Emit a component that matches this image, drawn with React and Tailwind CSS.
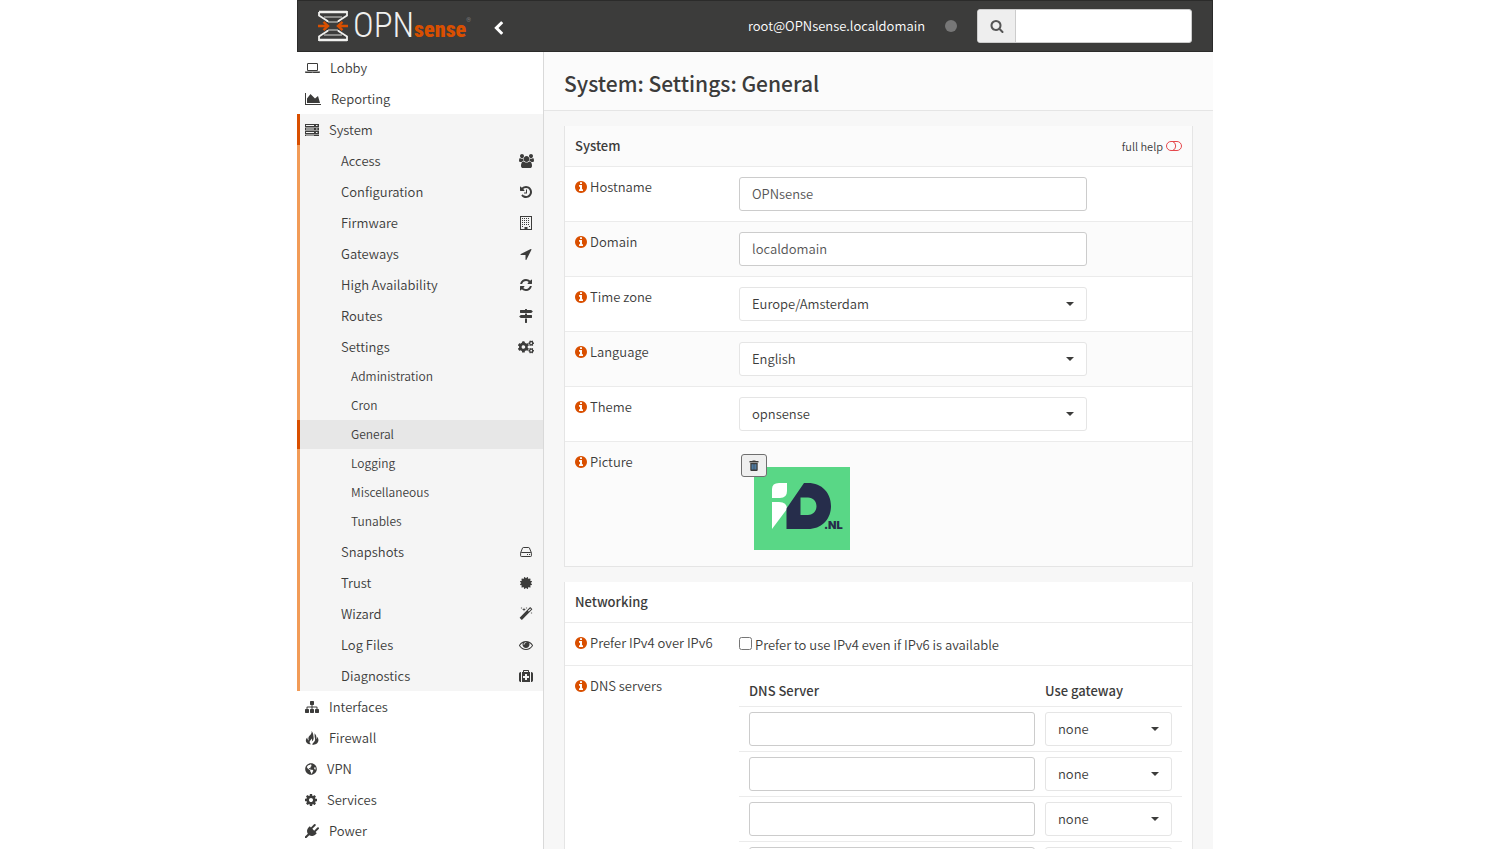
import { FaCogs, FaGlobeAmericas } from "react-icons/fa";

function Glyph({ d, viewBox = "0 0 1792 1792", className = "h-[14px] w-[14px]" }) {
  return (
    <svg viewBox={viewBox} className={`shrink-0 fill-current ${className}`} aria-hidden="true">
      <path fillRule="evenodd" d={d} />
    </svg>
  );
}

const paths = {
  laptop:
    "M416 1280q-66 0-113-47t-47-113v-704q0-66 47-113t113-47h1088q66 0 113 47t47 113v704q0 66-47 113t-113 47h-1088zm-32-864v704q0 13 9.5 22.5t22.5 9.5h1088q13 0 22.5-9.5t9.5-22.5v-704q0-13-9.5-22.5t-22.5-9.5h-1088q-13 0-22.5 9.5t-9.5 22.5zm1376 928h160v96q0 40-47 68t-113 28h-1600q-66 0-113-28t-47-68v-96h1760zm-720 96q16 0 16-16t-16-16h-160q-16 0-16 16t16 16h160z",
  chart: "M2048 1536v128h-2048v-1536h128v1408h1920zm-384-1024l256 896h-1664v-576l448-576 576 576z",
  server:
    "M0 128h1792v384h-1792zM128 256v128h1024v-128zM0 576h1792v384h-1792zM128 704v128h1024v-128zM0 1024h1792v384h-1792zM128 1152v128h1024v-128zM0 1472h1792v192h-1792zM128 1536v64h1024v-64zM1400 256h200v128h-200zM1400 704h200v128h-200zM1400 1152h200v128h-200z",
  users:
    "M529 896q-162 5-265 128h-134q-82 0-138-40.5t-56-118.5q0-353 124-353 6 0 43.5 21t97.5 42.5 119 21.5q67 0 133-23-5 37-5 66 0 139 81 256zm1071 637q0 120-73 189.5t-194 69.5h-874q-121 0-194-69.5t-73-189.5q0-53 3.5-103.5t14-109 26.5-108.5 43-97.5 62-81 85.5-53.5 111.5-20q10 0 43 21.5t73 48 107 48 135 21.5 135-21.5 107-48 73-48 43-21.5q61 0 111.5 20t85.5 53.5 62 81 43 97.5 26.5 108.5 14 109 3.5 103.5zm-1024-1277q0 106-75 181t-181 75-181-75-75-181 75-181 181-75 181 75 75 181zm704 384q0 159-112.5 271.5t-271.5 112.5-271.5-112.5-112.5-271.5 112.5-271.5 271.5-112.5 271.5 112.5 112.5 271.5zm576 225q0 78-56 118.5t-138 40.5h-134q-103-123-265-128 81-117 81-256 0-29-5-66 66 23 133 23 59 0 119-21.5t97.5-42.5 43.5-21q124 0 124 353zm-128-609q0 106-75 181t-181 75-181-75-75-181 75-181 181-75 181 75 75 181z",
  history:
    "M1664 896q0 156-61 298t-164 245-245 164-298 61q-172 0-327-72.5t-264-204.5q-7-10-6.5-22.5t8.5-20.5l137-138q10-9 25-9 16 2 23 12 73 95 179 147t225 52q104 0 198.5-40.5t163.5-109.5 109.5-163.5 40.5-198.5-40.5-198.5-109.5-163.5-163.5-109.5-198.5-40.5q-98 0-188 35.5t-160 101.5l137 138q31 30 14 69-17 40-59 40h-448q-26 0-45-19t-19-45v-448q0-42 40-59 39-17 69 14l130 129q107-101 244.5-156.5t284.5-55.5q156 0 298 61t245 164 164 245 61 298zm-640-288v448q0 14-9 23t-23 9h-320q-14 0-23-9t-9-23v-64q0-14 9-23t23-9h224v-352q0-14 9-23t23-9h64q14 0 23 9t9 23z",
  building:
    "M128 0h1536v1792h-1536zM256 128v1536h448v-256h384v256h448v-1536zM384 256h128v128h-128zM640 256h128v128h-128zM896 256h128v128h-128zM1152 256h128v128h-128zM384 512h128v128h-128zM640 512h128v128h-128zM896 512h128v128h-128zM1152 512h128v128h-128zM384 768h128v128h-128zM640 768h128v128h-128zM896 768h128v128h-128zM1152 768h128v128h-128zM384 1024h128v128h-128zM640 1024h128v128h-128zM896 1024h128v128h-128zM1152 1024h128v128h-128zM384 1280h128v128h-128zM1280 1280h128v128h-128z",
  arrow:
    "M1593 349l-640 1280q-17 35-57 35-5 0-15-2-22-5-35.5-22.5t-13.5-39.5v-576h-576q-22 0-39.5-13.5t-22.5-35.5 4-42 29-30l1280-640q13-7 29-7 27 0 45 19 15 14 18.5 34.5t-6.5 39.5z",
  refresh:
    "M1639 1056q0 5-1 7-64 268-268 434.5t-478 166.5q-146 0-282.5-55t-243.5-157l-129 129q-19 19-45 19t-45-19-19-45v-448q0-26 19-45t45-19h448q26 0 45 19t19 45-19 45l-137 137q71 66 161 102t187 36q134 0 250-65t186-179q11-17 53-117 8-23 30-23h192q13 0 22.5 9.5t9.5 22.5zm25-800v448q0 26-19 45t-45 19h-448q-26 0-45-19t-19-45 19-45l138-138q-148-137-349-137-134 0-250 65t-186 179q-11 17-53 117-8 23-30 23h-199q-13 0-22.5-9.5t-9.5-22.5v-7q65-268 270-434.5t480-166.5q146 0 284 55.5t245 156.5l130-129q19-19 45-19t45 19 19 45z",
  signs:
    "M1745 297q10 10 10 23t-10 23l-141 141q-28 28-68 28h-1344q-26 0-45-19t-19-45v-256q0-26 19-45t45-19h576v-64q0-26 19-45t45-19h128q26 0 45 19t19 45v64h512q40 0 68 28zm-977 919h256v512q0 26-19 45t-45 19h-128q-26 0-45-19t-19-45v-512zm832-448q26 0 45 19t19 45v256q0 26-19 45t-45 19h-1344q-40 0-68-28l-141-141q-10-10-10-23t10-23l141-141q28-28 68-28h512v-192h256v192h576z",
  certificate:
    "M1504 896l138 135q30 28 20 70-12 41-52 51l-188 48 53 186q12 41-19 70-29 31-70 19l-186-53-48 188q-10 40-51 52-12 2-19 2-31 0-51-22l-135-138-135 138q-28 30-70 20-41-11-51-52l-48-188-186 53q-41 12-70-19-31-29-19-70l53-186-188-48q-40-10-52-51-10-42 20-70l138-135-138-135q-30-28-20-70 12-41 52-51l188-48-53-186q-12-41 19-70 29-31 70-19l186 53 48-188q10-41 51-51 41-12 70 19l135 139 135-139q29-30 70-19 41 10 51 51l48 188 186-53q41-12 70 19 31 29 19 70l-53 186 188 48q40 10 52 51 10 42-20 70z",
  magic:
    "M1254 581l293-293-107-107-293 293zm447-293q0 27-18 45l-1286 1286q-18 18-45 18t-45-18l-198-198q-18-18-18-45t18-45l1286-1286q18-18 45-18t45 18l198 198q18 18 18 45zm-1351-190l98 30-98 30-30 98-30-98-98-30 98-30 30-98zm350 162l196 60-196 60-60 196-60-196-196-60 196-60 60-196zm930 478l98 30-98 30-30 98-30-98-98-30 98-30 30-98zm-640-640l98 30-98 30-30 98-30-98-98-30 98-30 30-98z",
  eye:
    "M1664 960q-152-236-381-353 61 104 61 225 0 185-131.5 316.5t-316.5 131.5-316.5-131.5-131.5-316.5q0-121 61-225-229 117-381 353 133 205 333.5 326.5t434.5 121.5 434.5-121.5 333.5-326.5zm-720-384q0-20-14-34t-34-14q-125 0-214.5 89.5t-89.5 214.5q0 20 14 34t34 14 34-14 14-34q0-86 61-147t147-61q20 0 34-14t14-34zm848 384q0 34-20 69-140 230-376.5 368.5t-499.5 138.5-499.5-139-376.5-368q-20-35-20-69t20-69q140-229 376.5-368t499.5-139 499.5 139 376.5 368q20 35 20 69z",
  medkit:
    "M1280 1120v-192q0-14-9-23t-23-9h-224v-224q0-14-9-23t-23-9h-192q-14 0-23 9t-9 23v224h-224q-14 0-23 9t-9 23v192q0 14 9 23t23 9h224v224q0 14 9 23t23 9h192q14 0 23-9t9-23v-224h224q14 0 23-9t9-23zm-640-736h512v-128h-512v128zm-384 0v1280h-32q-92 0-158-66t-66-158v-832q0-92 66-158t158-66h32zm1152 0v1280h-1024v-1280h128v-160q0-40 28-68t68-28h576q40 0 68 28t28 68v160h128zm384 224v832q0 92-66 158t-158 66h-32v-1280h32q92 0 158 66t66 158z",
  sitemap:
    "M1792 1248v320q0 40-28 68t-68 28h-320q-40 0-68-28t-28-68v-320q0-40 28-68t68-28h96v-192h-512v192h96q40 0 68 28t28 68v320q0 40-28 68t-68 28h-320q-40 0-68-28t-28-68v-320q0-40 28-68t68-28h96v-192h-512v192h96q40 0 68 28t28 68v320q0 40-28 68t-68 28h-320q-40 0-68-28t-28-68v-320q0-40 28-68t68-28h96v-192q0-52 38-90t90-38h512v-192h-96q-40 0-68-28t-28-68v-320q0-40 28-68t68-28h320q40 0 68 28t28 68v320q0 40-28 68t-68 28h-96v192h512q52 0 90 38t38 90v192h96q40 0 68 28t28 68z",
  cog:
    "M1152 896q0-106-75-181t-181-75-181 75-75 181 75 181 181 75 181-75 75-181zm512-109v222q0 12-8 23t-20 13l-185 28q-19 54-39 91 35 50 107 138 10 12 10 25t-9 23q-27 37-99 108t-94 71q-12 0-26-9l-138-108q-44 23-91 38-16 136-29 186-7 28-36 28h-222q-14 0-24.5-8.5t-11.5-21.5l-28-184q-49-16-90-37l-141 107q-10 9-25 9-14 0-25-11-126-114-165-168-7-10-7-23 0-12 8-23 15-21 51-66.5t54-70.5q-27-50-41-99l-183-27q-13-2-21-12.5t-8-23.5v-222q0-12 8-23t19-13l186-28q14-46 39-92-40-57-107-138-10-12-10-24 0-10 9-23 26-36 98.5-107.5t94.5-71.5q13 0 26 10l138 107q44-23 91-38 16-136 29-186 7-28 36-28h222q14 0 24.5 8.5t11.5 21.5l28 184q49 16 90 37l142-107q9-9 24-9 13 0 25 10 129 119 165 170 7 8 7 22 0 12-8 23-15 21-51 66.5t-54 70.5q26 50 41 98l183 28q13 2 21 12.5t8 23.5z",
  plug:
    "M1755 453q37 38 37 90.5t-37 90.5l-401 400 150 150-160 160q-163 163-389.5 186.5t-411.5-100.5l-362 362h-181v-181l362-362q-124-185-100.5-411.5t186.5-389.5l160-160 150 150 400-401q38-37 91-37t90 37 37 90.5-37 90.5l-400 401 234 234 401-400q38-37 91-37t90 37z",
  search:
    "M1216 832q0-185-131.5-316.5t-316.5-131.5-316.5 131.5-131.5 316.5 131.5 316.5 316.5 131.5 316.5-131.5 131.5-316.5zm512 832q0 52-38 90t-90 38q-54 0-90-38l-343-342q-179 124-399 124-143 0-273.5-55.5t-225-150-150-225-55.5-273.5 55.5-273.5 150-225 225-150 273.5-55.5 273.5 55.5 225 150 150 225 55.5 273.5q0 220-124 399l343 343q37 37 37 90z",
  info:
    "M1152 1376v-160q0-14-9-23t-23-9h-96v-512q0-14-9-23t-23-9h-320q-14 0-23 9t-9 23v160q0 14 9 23t23 9h96v320h-96q-14 0-23 9t-9 23v160q0 14 9 23t23 9h448q14 0 23-9t9-23zm-128-896v-160q0-14-9-23t-23-9h-192q-14 0-23 9t-9 23v160q0 14 9 23t23 9h192q14 0 23-9t9-23zm640 416q0 209-103 385.5t-279.5 279.5-385.5 103-385.5-103-279.5-279.5-103-385.5 103-385.5 279.5-279.5 385.5-103 385.5 103 279.5 279.5 103 385.5z",
  chevron:
    "M1427 301l-531 531 531 531q19 19 19 45t-19 45l-166 166q-19 19-45 19t-45-19l-742-742q-19-19-19-45t19-45l742-742q19-19 45-19t45 19l166 166q19 19 19 45t-19 45z",
};

const CROPPED = "128 128 1536 1536";

function FlameIcon() {
  return (
    <svg viewBox="0 0 14 14" className="h-[14px] w-[14px] shrink-0 fill-current" aria-hidden="true">
      <path d="M6.600 0C7 2 6 3.300 4.500 4.800C3.200 6.200 3 7.900 3.900 9.400C2.800 9 2.200 8 2.300 6.600C.8 7.700.4 9.700 1.300 11.200C2.200 12.700 4 13.500 6.200 13.200C4.800 12.500 4.200 11.300 4.900 10C5.400 9.100 6.300 8.600 6.500 7.400C7.200 8.200 7.300 9.300 6.700 10.400C8.200 9.500 8.900 8 8.600 6.200C8.300 4.300 8.300 1.900 6.600 0z" />
      <path d="M9.400 2.200C9.900 3.800 9.400 5 9.800 6.400C10.200 7.900 10.300 9.300 9.400 10.600C8.800 11.500 7.900 12 7.500 12.800C7.300 13.200 7.400 13.600 7.600 14C10.400 13.900 12.500 12.700 13.200 10.600C13.900 8.600 13.200 6.900 11.900 5.700C12 6.800 11.900 7.600 11.300 8.200C11.700 5.800 11.200 3.600 9.400 2.200z" />
    </svg>
  );
}

function HddIcon() {
  return (
    <svg viewBox="0 0 12 12" className="h-3 w-3 fill-none stroke-current" aria-hidden="true">
      <path d="M.6 6.800 2.600 1.900Q2.800 1.500 3.300 1.500H8.700Q9.200 1.500 9.400 1.900L11.400 6.800M.6 7.200Q.6 6.500 1.300 6.500H10.700Q11.400 6.500 11.400 7.200V9.800Q11.400 10.500 10.700 10.500H1.300Q.6 10.500 .6 9.800z" />
      <path d="M7 8.500h1M9 8.500h1" />
    </svg>
  );
}

const menuTop = [
  { label: "Lobby", icon: <Glyph d={paths.laptop} viewBox="0 0 1920 1792" className="h-[14px] w-[15px]" /> },
  { label: "Reporting", icon: <Glyph d={paths.chart} viewBox="0 0 2048 1792" className="h-[14px] w-4" /> },
];

const menuBottom = [
  { label: "Interfaces", icon: <Glyph d={paths.sitemap} /> },
  { label: "Firewall", icon: <FlameIcon /> },
  { label: "VPN", icon: <FaGlobeAmericas className="h-3 w-3" /> },
  { label: "Services", icon: <Glyph d={paths.cog} viewBox={CROPPED} className="h-3 w-3" /> },
  { label: "Power", icon: <Glyph d={paths.plug} /> },
];

const systemBefore = [
  { label: "Access", icon: <Glyph d={paths.users} viewBox="-64 0 1920 1792" className="h-[14px] w-[15px]" /> },
  { label: "Configuration", icon: <Glyph d={paths.history} viewBox={CROPPED} className="h-3 w-3" /> },
  { label: "Firmware", icon: <Glyph d={paths.building} className="h-[14px] w-[14px]" /> },
  { label: "Gateways", icon: <Glyph d={paths.arrow} /> },
  { label: "High Availability", icon: <Glyph d={paths.refresh} viewBox={CROPPED} className="h-3 w-3" /> },
  { label: "Routes", icon: <Glyph d={paths.signs} /> },
  { label: "Settings", icon: <FaCogs className="h-4 w-4" /> },
];

const settingsPages = ["Administration", "Cron", "General", "Logging", "Miscellaneous", "Tunables"];

const systemAfter = [
  { label: "Snapshots", icon: <HddIcon /> },
  { label: "Trust", icon: <Glyph d={paths.certificate} viewBox={CROPPED} className="h-3 w-3" /> },
  { label: "Wizard", icon: <Glyph d={paths.magic} /> },
  { label: "Log Files", icon: <Glyph d={paths.eye} /> },
  { label: "Diagnostics", icon: <Glyph d={paths.medkit} /> },
];

function MenuItem({ label, icon }) {
  return (
    <a href="#" className="flex h-[31px] items-center gap-[10px] pl-2">
      {icon}
      {label}
    </a>
  );
}

function SubItem({ label, icon }) {
  return (
    <a href="#" className="flex h-[31px] items-center justify-between border-l-[3px] border-[#f29b57] pr-2 pl-[41px]">
      {label}
      <span className="flex w-[18px] justify-center">{icon}</span>
    </a>
  );
}

function Sidebar() {
  return (
    <nav className="w-[247px] shrink-0 border-r border-[#d9d9d9] bg-white">
      {menuTop.map((item) => (
        <MenuItem key={item.label} {...item} />
      ))}
      <div className="bg-[#f5f5f5]">
        <a href="#" className="flex h-[31px] items-center gap-[10px] border-l-[3px] border-[#d94f00] pl-[5px]">
          <Glyph d={paths.server} />
          System
        </a>
        {systemBefore.map((item) => (
          <SubItem key={item.label} {...item} />
        ))}
        {settingsPages.map((page) => (
          <a
            key={page}
            href="#"
            className={`flex h-[29px] items-center border-l-[3px] pb-px pl-[51px] text-[12px] ${
              page === "General" ? "border-[#d94f00] bg-[#e7e7e7]" : "border-[#f29b57]"
            }`}
          >
            {page}
          </a>
        ))}
        {systemAfter.map((item) => (
          <SubItem key={item.label} {...item} />
        ))}
      </div>
      {menuBottom.map((item) => (
        <MenuItem key={item.label} {...item} />
      ))}
    </nav>
  );
}

function Logo() {
  return (
    <a href="#" aria-label="OPNsense" className="flex items-center">
      <svg viewBox="0 0 30 32" className="h-8 w-[30px] fill-none" aria-hidden="true">
        <path d="M6 7H24M6 25H24" stroke="#8b8b89" strokeWidth="2" />
        <path d="M10 12H20M10 20H20" stroke="#8b8b89" strokeWidth="2" />
        <path d="M1 2H29V5.500L20.500 11V12M20.500 20V21L29 26.500V30H1V26.500L9.500 21V20M9.500 12V11L1 5.500V2" stroke="#f0f0ee" strokeWidth="1.800" />
        <path d="M1 2H29M1 30H29" stroke="#f0f0ee" strokeWidth="2.400" />
        <path d="M0 16H9.500M5.500 11.800L10 16L5.500 20.200M30 16H20.500M24.500 11.800L20 16L24.500 20.200" stroke="#d94f00" strokeWidth="2.400" />
      </svg>
      <span className="flex items-baseline pt-1 pl-[5px] font-['Roboto_Condensed','Liberation_Sans',sans-serif] leading-8">
        <span className="text-[35px] font-light text-[#f0f0ee]">OPN</span>
        <span className="text-[22px] font-black text-[#d94f00]">sense</span>
        <span className="self-start text-[6px] leading-5 text-[#999]">®</span>
      </span>
    </a>
  );
}

function Header() {
  return (
    <header className="flex h-[52px] items-center border border-[#2b2b2a] bg-[#3c3c3b] pr-5 pl-5">
      <Logo />
      <button type="button" aria-label="Collapse menu" className="ml-5 pt-1 text-white">
        <Glyph d={paths.chevron} className="h-[15px] w-[15px]" />
      </button>
      <span className="ml-auto text-white">root@OPNsense.localdomain</span>
      <span className="mr-5 ml-5 h-3 w-3 rounded-full bg-[#777]" />
      <form className="flex h-[34px] w-[215px] overflow-hidden rounded-[3px] border border-[#ccc] bg-white">
        <button type="button" aria-label="Search" className="flex w-[38px] items-center justify-center border-r border-[#ccc] bg-[#eee] text-[#555]">
          <Glyph d={paths.search} className="h-[14px] w-[14px]" />
        </button>
        <input type="text" aria-label="Search" className="min-w-0 flex-1 px-3 text-[#555] outline-none" />
      </form>
    </header>
  );
}

function TextBox({ id, value, label }) {
  return (
    <input
      id={id}
      type="text"
      aria-label={label}
      defaultValue={value}
      className="block h-[34px] w-full rounded-[3px] border border-[#ccc] bg-white px-3 pb-[2px] text-[#555]"
    />
  );
}

function SelectBox({ id, value, label }) {
  return (
    <div className="relative">
      <select
        id={id}
        aria-label={label}
        defaultValue={value}
        className="block h-[34px] w-full appearance-none rounded-[3px] border border-[#e5e5e5] bg-white px-3"
      >
        <option>{value}</option>
      </select>
      <svg viewBox="0 0 8 4" className="pointer-events-none absolute top-[15px] right-[13px] h-1 w-2 fill-current" aria-hidden="true">
        <path d="M0 0h8L4 4z" />
      </svg>
    </div>
  );
}

function Row({ label, htmlFor, striped, children }) {
  return (
    <div className={`flex border-t border-[#ebebeb] px-[10px] py-[10px] ${striped ? "bg-[#fbfbfb]" : "bg-white"}`}>
      <label htmlFor={htmlFor} className="flex h-5 w-[164px] shrink-0 items-center gap-[3px]">
        <Glyph d={paths.info} viewBox={CROPPED} className="h-3 w-3 text-[#d94f00]" />
        {label}
      </label>
      {children}
    </div>
  );
}

function Card({ children }) {
  return <section className="border border-t-0 border-[#e5e5e5] bg-white">{children}</section>;
}

function BrandPicture() {
  return (
    <svg viewBox="0 0 96 83" className="ml-[15px] h-[83px] w-24" role="img" aria-label="iD.NL">
      <path fill="#59d786" d="M0 0h96v83H0z" />
      <path fill="#fff" d="M18 31V22Q18 16 25 16H33V24Q33 31 26 31zM18 35H25Q33 35 33 42L18 62z" />
      <path
        fill="#262d4b"
        fillRule="evenodd"
        d="M50 16H54C68 16 77 26 77 39S68 62 54 62H32.500V41.500zM46.500 30.500V48H54C59 48 62.500 44 62.500 39.200S59 30.500 54 30.500z"
      />
      <text x="70" y="62" fill="#262d4b" className="font-['Inter','Open_Sans',sans-serif] text-[11px] font-black">
        .NL
      </text>
    </svg>
  );
}

function SystemCard() {
  return (
    <Card>
      <div className="flex h-10 items-center justify-between bg-[#fbfbfb] px-[10px]">
        <h2 className="font-medium">System</h2>
        <a href="#" className="flex items-center gap-[3px] text-[11px]">
          full help
          <svg viewBox="0 0 16 10" className="h-[10px] w-4 fill-none stroke-[#e5484d]" aria-hidden="true">
            <rect x=".5" y=".5" width="15" height="9" rx="4.500" />
            <path d="M6.500 .5Q9.700 1.500 9.700 5T6.500 9.500" />
          </svg>
        </a>
      </div>
      <Row label="Hostname" htmlFor="hostname">
        <div className="w-full max-w-[348px]"><TextBox id="hostname" value="OPNsense" /></div>
      </Row>
      <Row label="Domain" htmlFor="domain" striped>
        <div className="w-full max-w-[348px]"><TextBox id="domain" value="localdomain" /></div>
      </Row>
      <Row label="Time zone" htmlFor="timezone">
        <div className="w-full max-w-[348px]"><SelectBox id="timezone" value="Europe/Amsterdam" /></div>
      </Row>
      <Row label="Language" htmlFor="language" striped>
        <div className="w-full max-w-[348px]"><SelectBox id="language" value="English" /></div>
      </Row>
      <Row label="Theme" htmlFor="theme">
        <div className="w-full max-w-[348px]"><SelectBox id="theme" value="opnsense" /></div>
      </Row>
      <Row label="Picture" htmlFor="picture-remove" striped>
        <div className="relative pt-[15px] pb-[6px]">
          <BrandPicture />
          <button
            id="picture-remove"
            type="button"
            aria-label="Remove picture"
            className="absolute top-[2px] left-[2px] flex h-[23px] w-[26px] items-center justify-center rounded-[3px] border border-[#6f6f6f] bg-[#efefef]"
          >
            <svg viewBox="0 0 10 11" className="h-[11px] w-[10px]" aria-hidden="true">
              <path d="M3.500 1V.5h3V1H9.500v1.500H.5V1zM1.300 3h7.400v7q0 1-1 1H2.300q-1 0-1-1z" fill="#3c3c3b" />
              <path d="M3.200 4.200v5.300M5 4.200v5.300M6.800 4.200v5.300" stroke="#5aa0e0" strokeWidth=".9" />
            </svg>
          </button>
        </div>
      </Row>
    </Card>
  );
}

function NetworkingCard() {
  return (
    <Card>
      <div className="flex h-10 items-center px-[10px]">
        <h2 className="font-medium">Networking</h2>
      </div>
      <Row label="Prefer IPv4 over IPv6" htmlFor="prefer-ipv4">
        <label className="flex h-[22px] items-center gap-[3px] pt-[2px]">
          <input id="prefer-ipv4" type="checkbox" className="mb-1 h-[13px] w-[13px]" />
          Prefer to use IPv4 even if IPv6 is available
        </label>
      </Row>
      <Row label="DNS servers" htmlFor="dns-0">
        <table className="w-full border-collapse text-left">
          <thead>
            <tr>
              <th className="h-[30px] pl-[10px] font-medium">DNS Server</th>
              <th className="h-[30px] w-[147px] pl-[10px] font-medium">Use gateway</th>
            </tr>
          </thead>
          <tbody>
            {[0, 1, 2, 3, 4].map((i) => (
              <tr key={i} className="border-t border-[#ebebeb]">
                <td className="py-[5px] pl-[10px]">
                  <TextBox id={`dns-${i}`} label="DNS Server" />
                </td>
                <td className="px-[10px] py-[5px]">
                  <SelectBox value="none" label="Use gateway" />
                </td>
              </tr>
            ))}
          </tbody>
        </table>
      </Row>
    </Card>
  );
}

export default function App() {
  return (
    <div className="h-screen overflow-hidden bg-white font-['Noto_Sans_CJK_SC','Open_Sans',sans-serif] text-[13px] leading-5 font-[350] text-[#3c3c3b]">
      <div className="mx-auto max-w-[917px] pl-px">
        <Header />
        <div className="flex">
          <Sidebar />
          <main className="min-w-0 flex-1 bg-[#f7f7f7]">
            <div className="flex h-[59px] items-center border-b border-[#e5e5e5] bg-[#fbfbfb] px-5 pt-[3px]">
              <h1 className="text-[21px] leading-7 font-medium">System: Settings: General</h1>
            </div>
            <div className="flex flex-col gap-[15px] px-5 pt-[15px]">
              <SystemCard />
              <NetworkingCard />
            </div>
          </main>
        </div>
      </div>
    </div>
  );
}
